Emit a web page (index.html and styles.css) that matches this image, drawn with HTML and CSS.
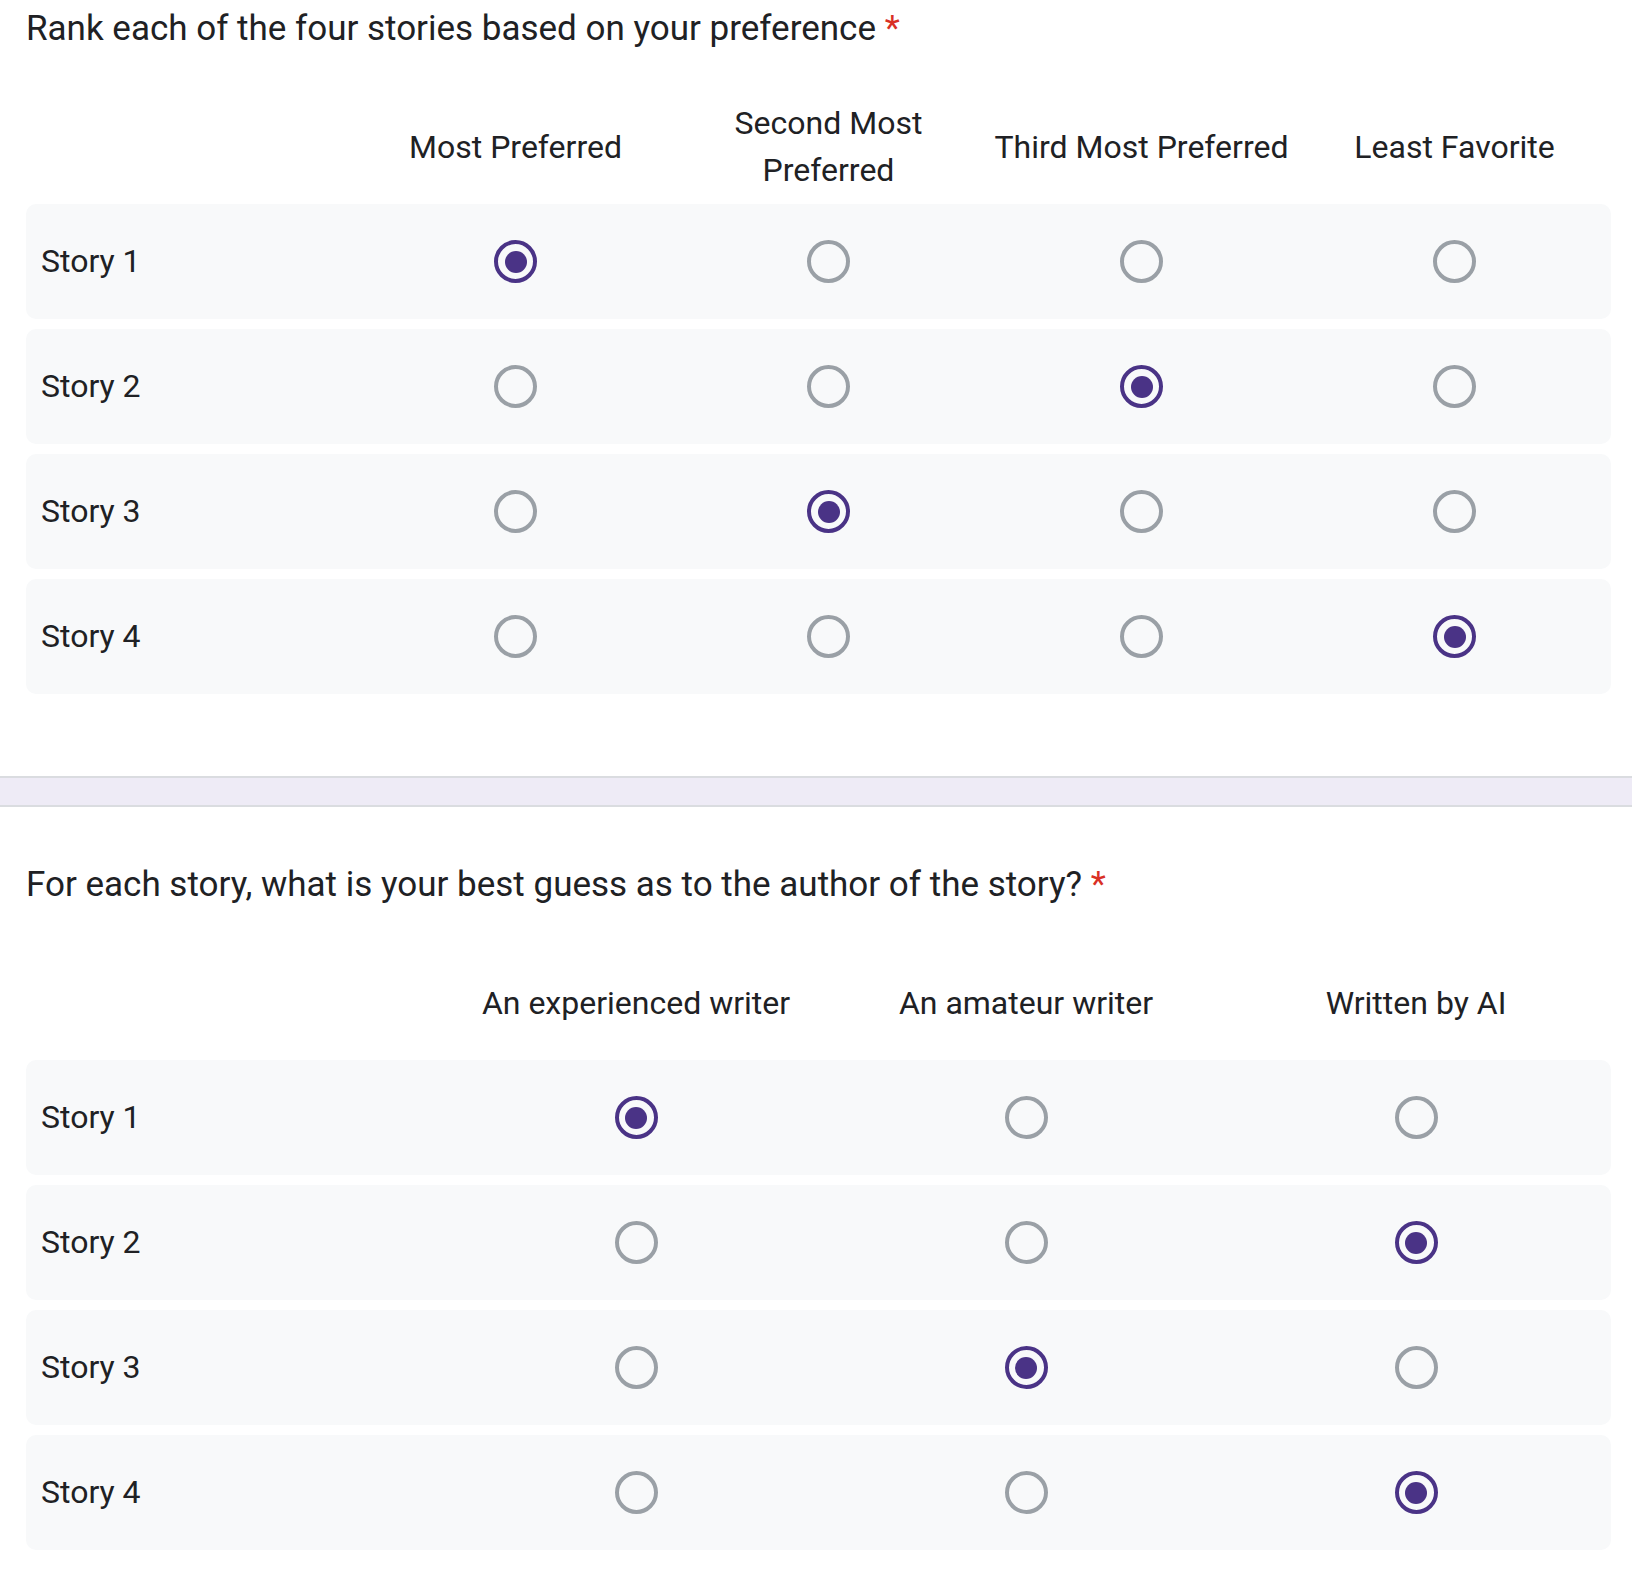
FILE: index.html
```html
<!DOCTYPE html>
<html lang="en">
<head>
<meta charset="utf-8">
<title>Story survey</title>
<link rel="stylesheet" href="styles.css">
</head>
<body>
<main class="page">
  <section class="question">
    <h2 class="q-title">Rank each of the four stories based on your preference <span class="req">*</span></h2>
    <div class="grid grid-4">
      <div class="grid-head">
        <div class="cell-label"></div>
        <div class="col-head">Most Preferred</div>
        <div class="col-head">Second Most<br>Preferred</div>
        <div class="col-head">Third Most Preferred</div>
        <div class="col-head">Least Favorite</div>
      </div>
      <div class="grid-row">
        <div class="cell-label">Story 1</div>
        <div class="cell"><span class="radio checked"></span></div>
        <div class="cell"><span class="radio"></span></div>
        <div class="cell"><span class="radio"></span></div>
        <div class="cell"><span class="radio"></span></div>
      </div>
      <div class="grid-row">
        <div class="cell-label">Story 2</div>
        <div class="cell"><span class="radio"></span></div>
        <div class="cell"><span class="radio"></span></div>
        <div class="cell"><span class="radio checked"></span></div>
        <div class="cell"><span class="radio"></span></div>
      </div>
      <div class="grid-row">
        <div class="cell-label">Story 3</div>
        <div class="cell"><span class="radio"></span></div>
        <div class="cell"><span class="radio checked"></span></div>
        <div class="cell"><span class="radio"></span></div>
        <div class="cell"><span class="radio"></span></div>
      </div>
      <div class="grid-row">
        <div class="cell-label">Story 4</div>
        <div class="cell"><span class="radio"></span></div>
        <div class="cell"><span class="radio"></span></div>
        <div class="cell"><span class="radio"></span></div>
        <div class="cell"><span class="radio checked"></span></div>
      </div>
    </div>
  </section>

  <div class="divider"></div>

  <section class="question second">
    <h2 class="q-title">For each story, what is your best guess as to the author of the story? <span class="req">*</span></h2>
    <div class="grid grid-3">
      <div class="grid-head">
        <div class="cell-label"></div>
        <div class="col-head">An experienced writer</div>
        <div class="col-head">An amateur writer</div>
        <div class="col-head">Written by AI</div>
      </div>
      <div class="grid-row">
        <div class="cell-label">Story 1</div>
        <div class="cell"><span class="radio checked"></span></div>
        <div class="cell"><span class="radio"></span></div>
        <div class="cell"><span class="radio"></span></div>
      </div>
      <div class="grid-row">
        <div class="cell-label">Story 2</div>
        <div class="cell"><span class="radio"></span></div>
        <div class="cell"><span class="radio"></span></div>
        <div class="cell"><span class="radio checked"></span></div>
      </div>
      <div class="grid-row">
        <div class="cell-label">Story 3</div>
        <div class="cell"><span class="radio"></span></div>
        <div class="cell"><span class="radio checked"></span></div>
        <div class="cell"><span class="radio"></span></div>
      </div>
      <div class="grid-row">
        <div class="cell-label">Story 4</div>
        <div class="cell"><span class="radio"></span></div>
        <div class="cell"><span class="radio"></span></div>
        <div class="cell"><span class="radio checked"></span></div>
      </div>
    </div>
  </section>
</main>
</body>
</html>
```

FILE: styles.css
```css
* { box-sizing: border-box; }

html, body {
  margin: 0;
  padding: 0;
  background: #ffffff;
}

body {
  font-family: Roboto, "Liberation Sans", Arial, sans-serif;
  color: #202124;
}

.page {
  width: 1632px;
  padding-top: 5px;
}

.question {
  padding: 0 21px 0 26px;
}

.q-title {
  margin: 0;
  font-size: 35px;
  font-weight: 400;
  line-height: 48px;
  letter-spacing: 0;
}

.req {
  color: #d93025;
}

.grid {
  margin-top: 47px;
  display: flex;
  flex-direction: column;
  gap: 10px;
}

.grid-head,
.grid-row {
  display: grid;
  align-items: center;
  font-size: 32px;
  line-height: 47px;
}

.grid-4 .grid-head,
.grid-4 .grid-row {
  grid-template-columns: 333px repeat(4, 1fr);
}

.grid-3 .grid-head,
.grid-3 .grid-row {
  grid-template-columns: 415px repeat(3, 1fr);
}

.grid-head {
  min-height: 94px;
}

.col-head {
  text-align: center;
}

.grid-row {
  height: 115px;
  background: #f8f9fa;
  border-radius: 10px;
}

.cell-label {
  padding-left: 15px;
}

.cell {
  display: flex;
  justify-content: center;
  align-items: center;
}

.radio {
  width: 43px;
  height: 43px;
  border-radius: 50%;
  border: 4.5px solid #9aa0a6;
  display: flex;
  align-items: center;
  justify-content: center;
}

.radio.checked {
  border-color: #4a3386;
}

.radio.checked::after {
  content: "";
  width: 22px;
  height: 22px;
  border-radius: 50%;
  background: #4a3386;
}

.divider {
  margin-top: 82px;
  height: 31px;
  background: #eeebf6;
  border-top: 2px solid #dadce0;
  border-bottom: 2px solid #dadce0;
}

.second {
  padding-top: 54px;
}
```
